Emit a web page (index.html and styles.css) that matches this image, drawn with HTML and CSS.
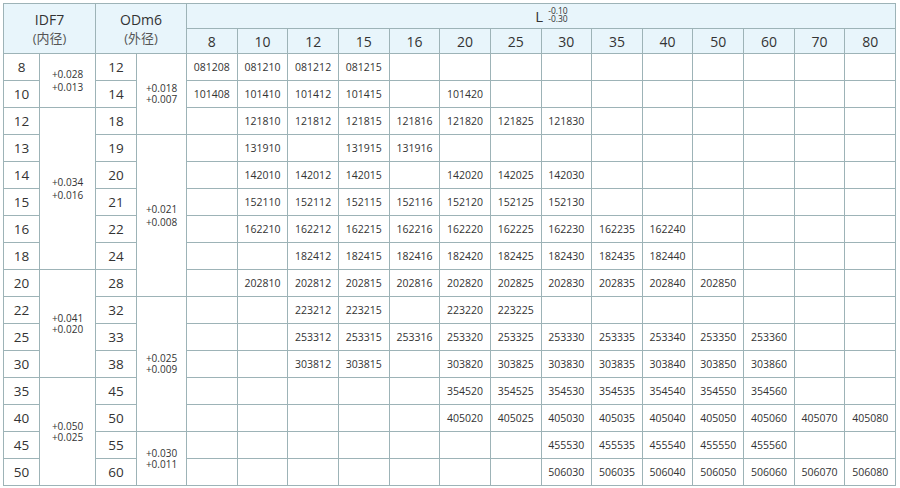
FILE: index.html
```html
<!DOCTYPE html>
<html lang="zh">
<head>
<meta charset="utf-8">
<link rel="stylesheet" href="styles.css">
</head>
<body>
<table class="spec">
  <colgroup>
    <col class="c-id"><col class="c-idt"><col class="c-od"><col class="c-odt">
    <col><col><col><col><col><col><col><col><col><col><col><col><col><col>
  </colgroup>
  <thead>
    <tr class="h1">
      <th colspan="2" rowspan="2" class="hd-main">IDF7<br><span class="cn">(内径)</span></th>
      <th colspan="2" rowspan="2" class="hd-main">ODm6<br><span class="cn">(外径)</span></th>
      <th colspan="14" class="hd-l"><span class="lwrap"><span class="lletter">L</span><span class="ltol"><span>-0.10</span><span>-0.30</span></span></span></th>
    </tr>
    <tr class="h2">
      <th>8</th><th>10</th><th>12</th><th>15</th><th>16</th><th>20</th><th>25</th><th>30</th><th>35</th><th>40</th><th>50</th><th>60</th><th>70</th><th>80</th>
    </tr>
  </thead>
  <tbody>
    <tr><td class="n">8</td><td rowspan="2" class="tol t1">+0.028<br>+0.013</td><td class="n">12</td><td rowspan="3" class="tol t2 down3">+0.018<br>+0.007</td>
      <td>081208</td><td>081210</td><td>081212</td><td>081215</td><td></td><td></td><td></td><td></td><td></td><td></td><td></td><td></td><td></td><td></td></tr>
    <tr><td class="n">10</td><td class="n">14</td>
      <td>101408</td><td>101410</td><td>101412</td><td>101415</td><td></td><td>101420</td><td></td><td></td><td></td><td></td><td></td><td></td><td></td><td></td></tr>
    <tr><td class="n">12</td><td rowspan="6" class="tol t1">+0.034<br>+0.016</td><td class="n">18</td>
      <td></td><td>121810</td><td>121812</td><td>121815</td><td>121816</td><td>121820</td><td>121825</td><td>121830</td><td></td><td></td><td></td><td></td><td></td><td></td></tr>
    <tr><td class="n">13</td><td class="n">19</td><td rowspan="6" class="tol t1">+0.021<br>+0.008</td>
      <td></td><td>131910</td><td></td><td>131915</td><td>131916</td><td></td><td></td><td></td><td></td><td></td><td></td><td></td><td></td><td></td></tr>
    <tr><td class="n">14</td><td class="n">20</td>
      <td></td><td>142010</td><td>142012</td><td>142015</td><td></td><td>142020</td><td>142025</td><td>142030</td><td></td><td></td><td></td><td></td><td></td><td></td></tr>
    <tr><td class="n">15</td><td class="n">21</td>
      <td></td><td>152110</td><td>152112</td><td>152115</td><td>152116</td><td>152120</td><td>152125</td><td>152130</td><td></td><td></td><td></td><td></td><td></td><td></td></tr>
    <tr><td class="n">16</td><td class="n">22</td>
      <td></td><td>162210</td><td>162212</td><td>162215</td><td>162216</td><td>162220</td><td>162225</td><td>162230</td><td>162235</td><td>162240</td><td></td><td></td><td></td><td></td></tr>
    <tr><td class="n">18</td><td class="n">24</td>
      <td></td><td></td><td>182412</td><td>182415</td><td>182416</td><td>182420</td><td>182425</td><td>182430</td><td>182435</td><td>182440</td><td></td><td></td><td></td><td></td></tr>
    <tr><td class="n">20</td><td rowspan="4" class="tol t2">+0.041<br>+0.020</td><td class="n">28</td>
      <td></td><td>202810</td><td>202812</td><td>202815</td><td>202816</td><td>202820</td><td>202825</td><td>202830</td><td>202835</td><td>202840</td><td>202850</td><td></td><td></td><td></td></tr>
    <tr><td class="n">22</td><td class="n">32</td><td rowspan="5" class="tol t2">+0.025<br>+0.009</td>
      <td></td><td></td><td>223212</td><td>223215</td><td></td><td>223220</td><td>223225</td><td></td><td></td><td></td><td></td><td></td><td></td><td></td></tr>
    <tr><td class="n">25</td><td class="n">33</td>
      <td></td><td></td><td>253312</td><td>253315</td><td>253316</td><td>253320</td><td>253325</td><td>253330</td><td>253335</td><td>253340</td><td>253350</td><td>253360</td><td></td><td></td></tr>
    <tr><td class="n">30</td><td class="n">38</td>
      <td></td><td></td><td>303812</td><td>303815</td><td></td><td>303820</td><td>303825</td><td>303830</td><td>303835</td><td>303840</td><td>303850</td><td>303860</td><td></td><td></td></tr>
    <tr><td class="n">35</td><td rowspan="4" class="tol t2">+0.050<br>+0.025</td><td class="n">45</td>
      <td></td><td></td><td></td><td></td><td></td><td>354520</td><td>354525</td><td>354530</td><td>354535</td><td>354540</td><td>354550</td><td>354560</td><td></td><td></td></tr>
    <tr><td class="n">40</td><td class="n">50</td>
      <td></td><td></td><td></td><td></td><td></td><td>405020</td><td>405025</td><td>405030</td><td>405035</td><td>405040</td><td>405050</td><td>405060</td><td>405070</td><td>405080</td></tr>
    <tr><td class="n">45</td><td class="n">55</td><td rowspan="2" class="tol t2">+0.030<br>+0.011</td>
      <td></td><td></td><td></td><td></td><td></td><td></td><td></td><td>455530</td><td>455535</td><td>455540</td><td>455550</td><td>455560</td><td></td><td></td></tr>
    <tr><td class="n">50</td><td class="n">60</td>
      <td></td><td></td><td></td><td></td><td></td><td></td><td></td><td>506030</td><td>506035</td><td>506040</td><td>506050</td><td>506060</td><td>506070</td><td>506080</td></tr>
  </tbody>
</table>
</body>
</html>
```
FILE: styles.css
```css
html, body {
  margin: 0;
  padding: 0;
  background: #ffffff;
}

body {
  padding: 3px 0 0 3px;
  font-family: "Open Sans", "Noto Sans CJK SC", sans-serif;
  color: #333333;
}

.spec {
  border-collapse: collapse;
  table-layout: fixed;
  width: 893px;
  border: 1px solid #90a8ad;
}

.c-id { width: 36px; }
.c-idt { width: 56px; }
.c-od { width: 41px; }
.c-odt { width: 50px; }

.spec th,
.spec td {
  border: 1px solid #9db3b7;
  padding: 0;
  text-align: center;
  vertical-align: middle;
  overflow: hidden;
  white-space: nowrap;
}

.spec th {
  background: #e8f5fb;
  font-weight: normal;
  color: #333333;
}

.h1 { height: 25px; }
.h2 { height: 25px; }
.spec tbody tr { height: 27px; }

.hd-main {
  font-size: 14px;
  line-height: 18px;
  padding-top: 1px;
}

.cn {
  font-size: 13px;
  color: #555555;
}

.h2 th {
  font-size: 14px;
}

.lwrap {
  display: inline-flex;
  align-items: center;
  padding-left: 21px;
}

.lletter {
  font-size: 15px;
  line-height: 18px;
}

.ltol {
  display: inline-flex;
  flex-direction: column;
  font-size: 8.5px;
  line-height: 8px;
  margin-left: 5px;
  margin-top: -3px;
  text-align: left;
}

.spec td {
  font-size: 10.5px;
  color: #333333;
}

.spec td.n {
  font-size: 13.5px;
}

.spec td.tol {
  font-size: 10px;
}

.t1 { line-height: 12.5px; }
.t2 { line-height: 11px; }
.down3 { padding-top: 6px; }
```
